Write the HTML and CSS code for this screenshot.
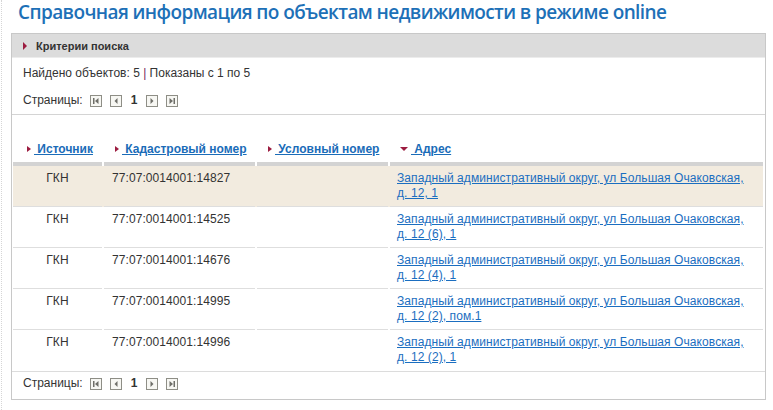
FILE: index.html
```html
<!DOCTYPE html>
<html lang="ru">
<head>
<meta charset="utf-8">
<title>Справочная информация</title>
<link rel="stylesheet" href="styles.css">
</head>
<body>
<div class="page">
  <h1 class="title">Справочная информация по объектам недвижимости в режиме online</h1>
  <div class="panel">
    <div class="panel-head"><span class="tri-right"></span>Критерии поиска</div>
    <div class="info">
      <div class="found">Найдено объектов: 5 <span class="pipe">|</span> Показаны с 1 по 5</div>
      <div class="pager">
        <span class="pager-label">Страницы:</span>
        <svg class="pg" width="12" height="12" viewBox="0 0 12 12"><rect x="0.5" y="0.5" width="11" height="11" fill="#f7f7f3" stroke="#8e8e86"/><rect x="3" y="3" width="1.5" height="6" fill="#6e6e68"/><polygon points="8.5,3 8.5,9 5,6" fill="#6e6e68"/></svg>
        <svg class="pg" width="12" height="12" viewBox="0 0 12 12"><rect x="0.5" y="0.5" width="11" height="11" fill="#f7f7f3" stroke="#8e8e86"/><polygon points="7.5,3 7.5,9 4.5,6" fill="#6e6e68"/></svg>
        <b class="cur">1</b>
        <svg class="pg" width="12" height="12" viewBox="0 0 12 12"><rect x="0.5" y="0.5" width="11" height="11" fill="#f7f7f3" stroke="#8e8e86"/><polygon points="4.5,3 4.5,9 7.5,6" fill="#6e6e68"/></svg>
        <svg class="pg" width="12" height="12" viewBox="0 0 12 12"><rect x="0.5" y="0.5" width="11" height="11" fill="#f7f7f3" stroke="#8e8e86"/><polygon points="3.5,3 3.5,9 7,6" fill="#6e6e68"/><rect x="7.5" y="3" width="1.5" height="6" fill="#6e6e68"/></svg>
      </div>
    </div>
    <table class="grid">
      <colgroup><col class="c1"><col class="c2"><col class="c3"><col class="c4"></colgroup>
      <thead>
        <tr>
          <th class="h1c"><span class="tri-right"></span><a href="#"> Источник</a></th>
          <th class="h2c"><span class="tri-right"></span><a href="#"> Кадастровый номер</a></th>
          <th class="h3c"><span class="tri-right"></span><a href="#"> Условный номер</a></th>
          <th class="h4c"><span class="tri-down"></span><a href="#"> Адрес</a></th>
        </tr>
      </thead>
      <tbody>
        <tr class="hl">
          <td class="src">ГКН</td><td class="cad">77:07:0014001:14827</td><td></td>
          <td class="addr"><a href="#">Западный административный округ, ул Большая Очаковская, д. 12, 1</a></td>
        </tr>
        <tr>
          <td class="src">ГКН</td><td class="cad">77:07:0014001:14525</td><td></td>
          <td class="addr"><a href="#">Западный административный округ, ул Большая Очаковская, д. 12 (6), 1</a></td>
        </tr>
        <tr>
          <td class="src">ГКН</td><td class="cad">77:07:0014001:14676</td><td></td>
          <td class="addr"><a href="#">Западный административный округ, ул Большая Очаковская, д. 12 (4), 1</a></td>
        </tr>
        <tr>
          <td class="src">ГКН</td><td class="cad">77:07:0014001:14995</td><td></td>
          <td class="addr"><a href="#">Западный административный округ, ул Большая Очаковская, д. 12 (2), пом.1</a></td>
        </tr>
        <tr class="last">
          <td class="src">ГКН</td><td class="cad">77:07:0014001:14996</td><td></td>
          <td class="addr"><a href="#">Западный административный округ, ул Большая Очаковская, д. 12 (2), 1</a></td>
        </tr>
      </tbody>
    </table>
    <div class="footer">
      <div class="pager">
        <span class="pager-label">Страницы:</span>
        <svg class="pg" width="12" height="12" viewBox="0 0 12 12"><rect x="0.5" y="0.5" width="11" height="11" fill="#f7f7f3" stroke="#8e8e86"/><rect x="3" y="3" width="1.5" height="6" fill="#6e6e68"/><polygon points="8.5,3 8.5,9 5,6" fill="#6e6e68"/></svg>
        <svg class="pg" width="12" height="12" viewBox="0 0 12 12"><rect x="0.5" y="0.5" width="11" height="11" fill="#f7f7f3" stroke="#8e8e86"/><polygon points="7.5,3 7.5,9 4.5,6" fill="#6e6e68"/></svg>
        <b class="cur">1</b>
        <svg class="pg" width="12" height="12" viewBox="0 0 12 12"><rect x="0.5" y="0.5" width="11" height="11" fill="#f7f7f3" stroke="#8e8e86"/><polygon points="4.5,3 4.5,9 7.5,6" fill="#6e6e68"/></svg>
        <svg class="pg" width="12" height="12" viewBox="0 0 12 12"><rect x="0.5" y="0.5" width="11" height="11" fill="#f7f7f3" stroke="#8e8e86"/><polygon points="3.5,3 3.5,9 7,6" fill="#6e6e68"/><rect x="7.5" y="3" width="1.5" height="6" fill="#6e6e68"/></svg>
      </div>
    </div>
  </div>
</div>
</body>
</html>
```
FILE: styles.css
```css
html, body {
  margin: 0;
  padding: 0;
  background: #fff;
}
body {
  font-family: "Liberation Sans", Arial, sans-serif;
  font-size: 12px;
  color: #333;
}
.page {
  margin-left: 1px;
  border-left: 1px dotted #d6d6d6;
  min-height: 410px;
  box-sizing: border-box;
}
.title {
  margin: 0 0 9px 0;
  padding-left: 16px;
  font-family: "Open Sans", sans-serif;
  font-weight: 600;
  font-size: 19px;
  letter-spacing: -0.6px;
  line-height: 24px;
  color: #1d70b7;
  white-space: nowrap;
}
.panel {
  margin-left: 9px;
  width: 755px;
  box-sizing: border-box;
  border: 1px solid #c8c8c8;
}
.panel-head {
  height: 23px;
  background: #dcdcdc;
  border-bottom: 1px solid #ececec;
  display: flex;
  align-items: center;
  padding-left: 11px;
  font-weight: bold;
  font-size: 11px;
  color: #333;
}
.tri-right {
  display: inline-block;
  width: 0;
  height: 0;
  border-top: 3.5px solid transparent;
  border-bottom: 3.5px solid transparent;
  border-left: 4px solid #9c1c40;
  margin-right: 9px;
  vertical-align: middle;
}
.panel-head .tri-right {
  border-top-width: 4px;
  border-bottom-width: 4px;
  margin-right: 9px;
}
.tri-down {
  display: inline-block;
  width: 0;
  height: 0;
  border-left: 4px solid transparent;
  border-right: 4px solid transparent;
  border-top: 4px solid #9c1c40;
  margin-right: 3px;
  vertical-align: middle;
}
.info {
  padding: 8px 11px 6px 11px;
  border-bottom: 1px solid #d4d4d4;
}
.found {
  line-height: 15px;
}
.pipe {
  color: #74285e;
}
.pager {
  display: flex;
  align-items: center;
  height: 15px;
  line-height: 15px;
}
.info .pager {
  margin-top: 12px;
}
.pager-label {
  margin-right: 7px;
}
.pg {
  display: block;
  margin-right: 8px;
}
.cur {
  font-weight: bold;
  margin: 0 9px 0 1px;
}
.grid {
  margin: 22px 1px 0 1px;
  width: 750px;
  border-collapse: collapse;
  table-layout: fixed;
}
.c1 { width: 91px; }
.c2 { width: 153px; }
.c3 { width: 133px; }
.c4 { width: 373px; }
.grid th {
  text-align: left;
  font-weight: bold;
  padding: 5px 0 9px 0;
  line-height: 15px;
  white-space: nowrap;
  background: linear-gradient(#d3d3d3, #d3d3d3) no-repeat left bottom / calc(100% - 2px) 4px;
}
.grid th.h4c {
  background-size: 100% 4px;
}
.grid th a {
  color: #1a6cb8;
  text-decoration: underline;
}
.h1c { padding-left: 14px !important; }
.h2c { padding-left: 11px !important; }
.h3c { padding-left: 11px !important; }
.h4c { padding-left: 10px !important; }
.grid th .tri-right {
  margin-right: 3px;
  position: relative;
  top: -1px;
}
.grid th .tri-down {
  position: relative;
  top: -1px;
}
.grid td {
  vertical-align: top;
  padding: 5px 0 6px 0;
  height: 30px;
  line-height: 15px;
  letter-spacing: 0.08px;
  background-image: linear-gradient(#dedede, #dedede);
  background-repeat: no-repeat;
  background-position: left bottom;
  background-size: calc(100% - 2px) 1px;
}
.grid td.addr {
  background-size: 100% 1px;
}
.grid tr.last td {
  background-image: none;
}
.grid tr.hl td {
  background-color: #f2ebdf;
}
.src {
  text-align: center;
  padding-right: 2px !important;
}
.cad {
  padding-left: 8px !important;
}
.addr {
  padding-left: 7px !important;
  padding-right: 14px !important;
}
.addr a {
  color: #1b6ec0;
  text-decoration: underline;
}
.footer {
  border-top: 1px solid #dcdcdc;
  padding: 4px 11px 8px 11px;
}
```
